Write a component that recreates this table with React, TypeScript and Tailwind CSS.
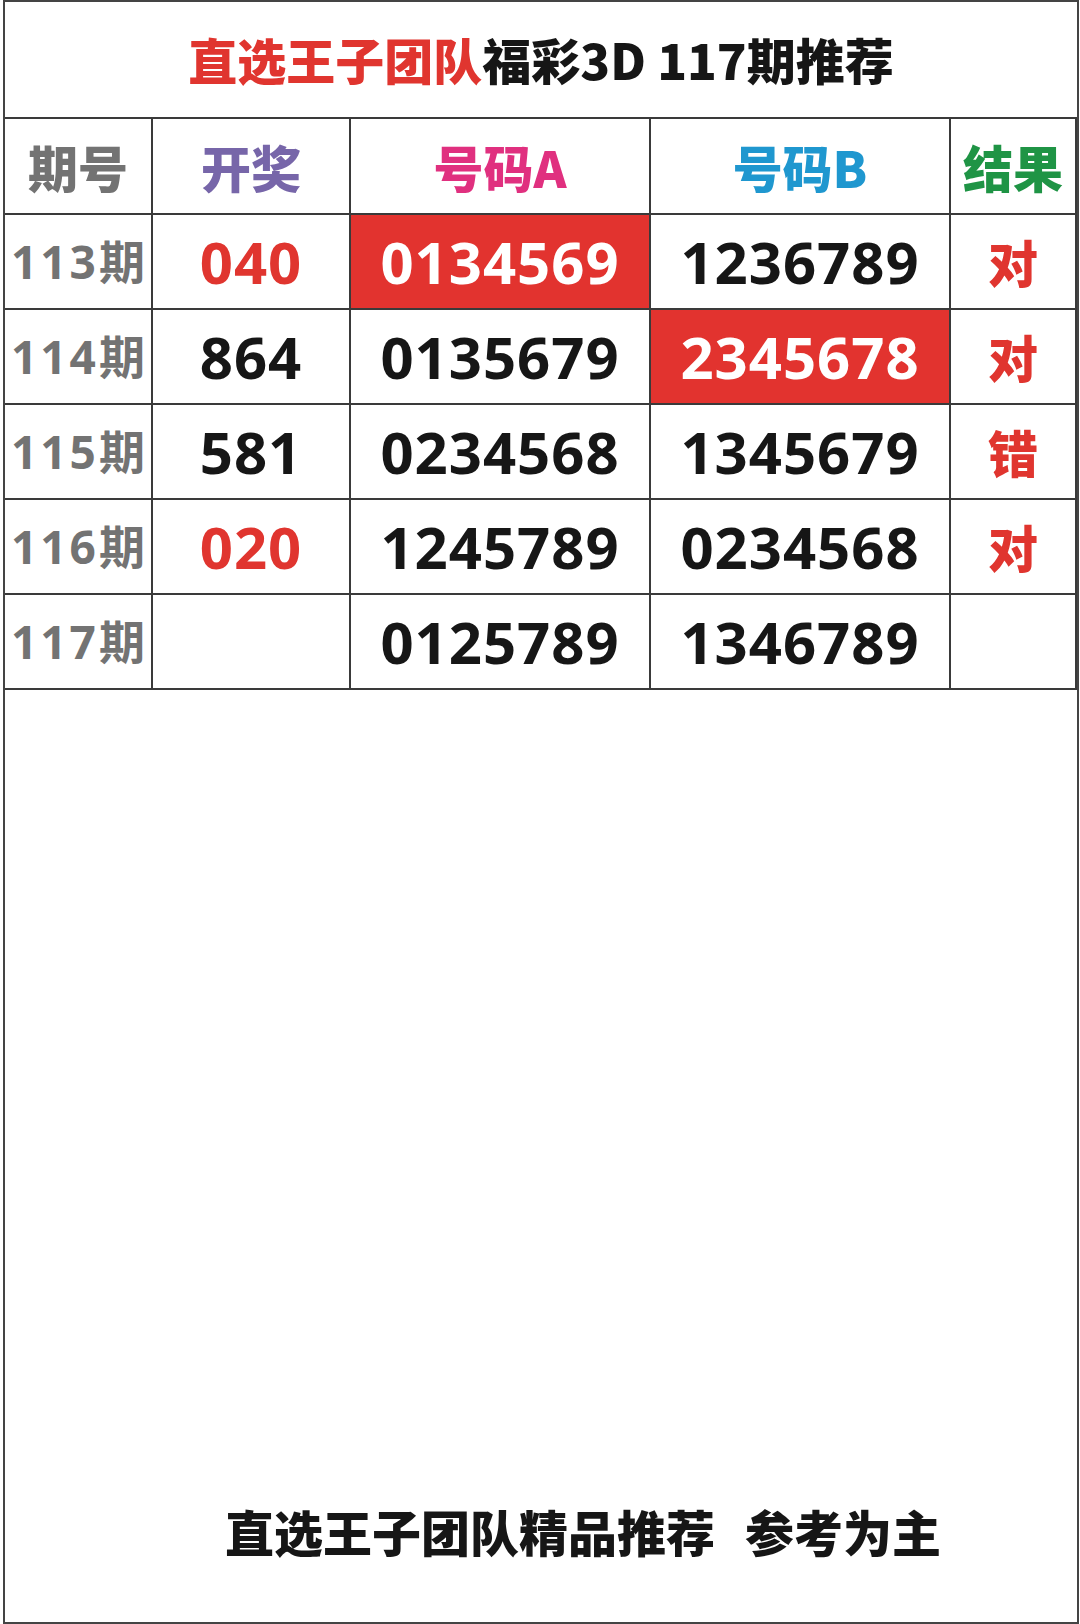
const CJK = "font-['Noto_Sans_CJK_SC',sans-serif]";
const NUM = "font-['Open_Sans','Noto_Sans_CJK_SC',sans-serif]";

type Row = {
  issue: string;
  draw: string;
  a: string;
  b: string;
  result: string;
  hit?: 'a' | 'b';
};

const ROWS: Row[] = [
  { issue: '113期', draw: '040', a: '0134569', b: '1236789', result: '对', hit: 'a' },
  { issue: '114期', draw: '864', a: '0135679', b: '2345678', result: '对', hit: 'b' },
  { issue: '115期', draw: '581', a: '0234568', b: '1345679', result: '错' },
  { issue: '116期', draw: '020', a: '1245789', b: '0234568', result: '对' },
  { issue: '117期', draw: '', a: '0125789', b: '1346789', result: '' },
];

// draws with a repeated digit (组三) are shown in red
function drawColor(draw: string) {
  const set = new Set(draw.split(''));
  return set.size < draw.length ? 'text-[#e0352f]' : 'text-[#161616]';
}

const cell = 'flex items-center justify-center border-r-2 border-b-2 border-[#3a3a3a]';

export default function App() {
  return (
    <div className="h-[1624px] w-[1080px] bg-white">
      <div className="ml-[3px] flex h-[1624px] w-[1076px] flex-col border-2 border-[#444]">
        {/* Title */}
        <div className={`flex h-[117px] items-center justify-center border-b-2 border-[#3a3a3a] pb-[2px] ${CJK}`}>
          <span className="text-[49px] font-black leading-none text-[#e0352f]">直选王子团队</span>
          <span className="text-[49px] font-black leading-none text-[#161616]">福彩3D 117期推荐</span>
        </div>

        {/* Table */}
        <div className="grid grid-cols-[148px_198px_300px_300px_1fr]">
          <div className={`${cell} h-[96px] ${CJK} text-[50px] font-black text-[#737373]`}>期号</div>
          <div className={`${cell} h-[96px] ${CJK} text-[50px] font-black text-[#7766a9]`}>开奖</div>
          <div className={`${cell} h-[96px] ${CJK} text-[50px] font-black text-[#e0307f]`}>号码A</div>
          <div className={`${cell} h-[96px] ${CJK} text-[50px] font-black text-[#1f97cf]`}>号码B</div>
          <div className={`${cell} h-[96px] border-r-0 ${CJK} text-[50px] font-black text-[#1f9445]`}>结果</div>

          {ROWS.map((r) => (
            <div key={r.issue} className="contents">
              <div className={`${cell} h-[95px] justify-start pl-[6px] ${NUM} text-[46px] font-bold tracking-[3px] text-[#737373]`}>
                {r.issue}
              </div>
              <div className={`${cell} h-[95px] ${NUM} text-[58px] font-bold tracking-[1px] ${drawColor(r.draw)}`}>
                {r.draw}
              </div>
              <div
                className={`${cell} h-[95px] ${NUM} text-[58px] font-bold tracking-[1px] ${
                  r.hit === 'a' ? 'bg-[#e2332f] text-white' : 'text-[#161616]'
                }`}
              >
                {r.a}
              </div>
              <div
                className={`${cell} h-[95px] ${NUM} text-[58px] font-bold tracking-[1px] ${
                  r.hit === 'b' ? 'bg-[#e2332f] text-white' : 'text-[#161616]'
                }`}
              >
                {r.b}
              </div>
              <div className={`${cell} h-[95px] border-r-0 ${CJK} text-[50px] font-black text-[#e0352f]`}>
                {r.result}
              </div>
            </div>
          ))}
        </div>

        <div className="flex-1" />

        {/* Footer */}
        <div className={`flex h-[170px] items-center justify-center pb-[14px] pl-[84px] ${CJK}`}>
          <span className="text-[49px] font-black leading-none text-[#161616]">直选王子团队精品推荐</span>
          <span className="ml-[30px] text-[49px] font-black leading-none text-[#161616]">参考为主</span>
        </div>
      </div>
    </div>
  );
}
